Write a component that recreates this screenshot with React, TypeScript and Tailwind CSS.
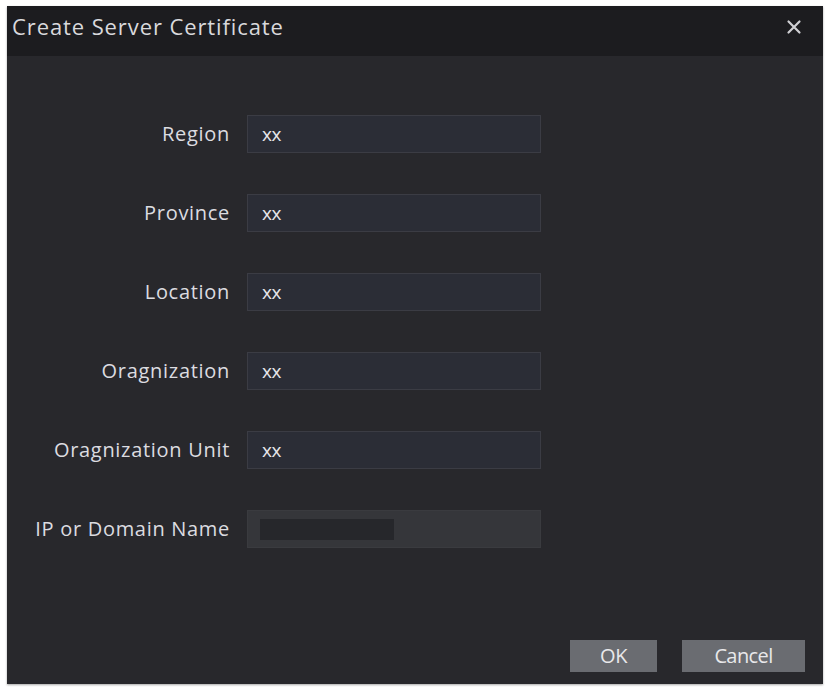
import React from "react";

const rows = [
  { label: "Region", value: "xx" },
  { label: "Province", value: "xx" },
  { label: "Location", value: "xx" },
  { label: "Oragnization", value: "xx" },
  { label: "Oragnization Unit", value: "xx" },
];

const labelCls = "h-[38px] flex items-center justify-end text-[20px] text-[#dcdce0] tracking-[0.7px]";

export default function App() {
  return (
    <div className="w-[829px] h-[690px] bg-white pt-[6px] pl-[7px]" style={{ fontFamily: '"Open Sans", "Noto Sans", sans-serif' }}>
      <div className="w-[816px] h-[678px] bg-[#28282c] flex flex-col shadow-[0_1px_2px_rgba(0,0,0,0.35)]">
        <div className="h-[50px] bg-[#1c1c1f] flex items-start justify-between pl-[5px] pr-[21px] pt-[5px]">
          <div className="text-[22px] leading-[30px] text-[#d9d9dc] tracking-[0.9px]">Create Server Certificate</div>
          <svg width="16" height="16" viewBox="0 0 16 16" className="mt-[8px]">
            <path d="M2.5 2.5 L13.5 13.5 M13.5 2.5 L2.5 13.5" stroke="#cfcfd3" strokeWidth="2.2" strokeLinecap="round" />
          </svg>
        </div>
        <div className="flex-1 pt-[59px]">
          <div className="grid grid-cols-[223px_294px] gap-x-[17px] gap-y-[41px]">
            {rows.map((r) => (
              <React.Fragment key={r.label}>
                <div className={labelCls}>{r.label}</div>
                <div className="h-[38px] bg-[#2b2d36] border border-[#3b3c44] flex items-center pl-[14px] text-[19px] font-medium text-[#e6e6ea] tracking-[-0.5px]">{r.value}</div>
              </React.Fragment>
            ))}
            <div className={labelCls}>IP or Domain Name</div>
            <div className="h-[38px] bg-[#35363a] border border-[#3a3b3f] flex items-center pl-[12px]">
              <div className="w-[134px] h-[21px] bg-[#26272b]" />
            </div>
          </div>
        </div>
        <div className="flex justify-end gap-[25px] pr-[18px] pb-[12px]">
          <div className="w-[87px] h-[32px] bg-[#6a6c71] flex items-center justify-center text-[20px] text-[#e8e8ea] tracking-[-0.3px]">OK</div>
          <div className="w-[123px] h-[32px] bg-[#6a6c71] flex items-center justify-center text-[20px] text-[#e8e8ea] tracking-[-0.6px]">Cancel</div>
        </div>
      </div>
    </div>
  );
}
